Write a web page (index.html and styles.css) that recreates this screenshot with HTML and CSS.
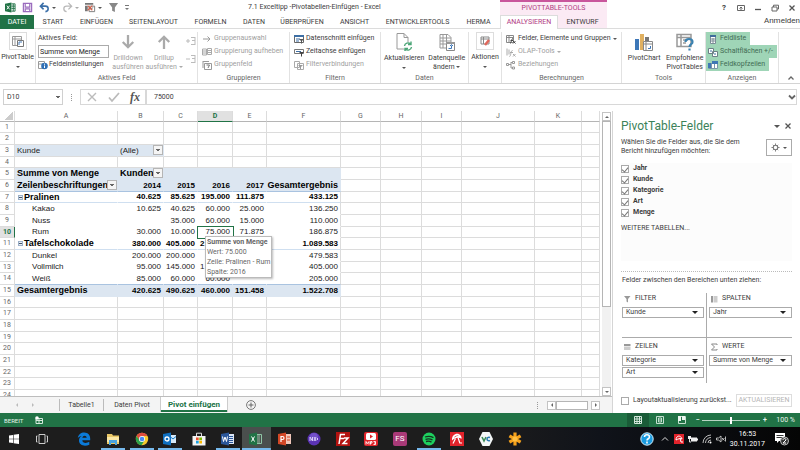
FILE: index.html
```html
<!DOCTYPE html>
<html lang="de">
<head>
<meta charset="utf-8">
<title>7.1 Exceltipp -Pivotabellen-Einfügen - Excel</title>
<link rel="stylesheet" href="styles.css">
</head>
<body>
<header class="titlebar">
  <div class="quick">
    <svg class="q" viewBox="0 0 12 12"><path fill="#217346" d="M0 2l7-1.500v11L0 10z"/><path d="M7 2h4v8H7M9 2v8M7 4.500h4M7 7h4" fill="none" stroke="#217346"/><path d="M2 4l3 4M5 4L2 8" stroke="#fff"/></svg>
    <button aria-label="Speichern"><svg class="q" viewBox="0 0 12 12"><path d="M1.500 1.500h9v9h-9zM3.500 1.500v4h5v-4M3.500 10.500v-3h5v3" fill="none" stroke="#9a6bbd" stroke-width="1.300"/></svg></button>
    <button aria-label="Rückgängig"><svg class="q" viewBox="0 0 12 12"><path d="M5 1L1.500 4.500 5 8M2 4.500h5c4 0 4 5.500 0 6" fill="none" stroke="#3a6ea8" stroke-width="1.700"/></svg><i class="caret"></i></button>
    <button aria-label="Wiederholen"><svg class="q" viewBox="0 0 12 12"><path d="M7 1l3.500 3.500L7 8M10 4.500H5c-4 0-4 5.500 0 6" fill="none" stroke="#b9b9b9" stroke-width="1.400"/></svg><i class="caret pale"></i></button>
    <button aria-label="Pivot bearbeiten"><svg class="q" viewBox="0 0 12 12"><path fill="#777" d="M0 1h9v2H0zM0 4h3v6H0z"/><path d="M4.500 4.500h6v6h-6zM6 8l3-2" fill="#fff" stroke="#777"/><path d="M3 4l5 5M8 4L3 9" stroke="#d8604a" stroke-width="1.200"/></svg><i class="caret"></i></button>
    <button aria-label="Filter"><svg class="q" viewBox="0 0 12 12"><path fill="#888" d="M1 1h10L7.500 6v5l-3-1.500V6z"/></svg></button>
    <button aria-label="Symbolleiste anpassen"><svg class="more" viewBox="0 0 4 6"><path fill="#777" d="M0 0h4v1H0zM0 3h4L2 5z"/></svg></button>
  </div>
  <div class="doc">7.1 Exceltipp -Pivotabellen-Einfügen - Excel</div>
  <div class="context">PIVOTTABLE-TOOLS</div>
  <div class="window">
    <button aria-label="Hilfe"><b>?</b></button>
    <button aria-label="Menüband-Anzeige"><svg viewBox="0 0 8 8"><path d="M.5 1.500h7v5h-7zM4 6V3M2.500 4.500L4 3l1.500 1.500" fill="none" stroke="#666"/></svg></button>
    <button aria-label="Minimieren"><svg viewBox="0 0 8 8"><path d="M1 5.500h6" stroke="#555" stroke-width="1.300"/></svg></button>
    <button aria-label="Verkleinern"><svg viewBox="0 0 8 8"><path d="M1 3h5v4H1zM2.500 3V1.200h5V5H6" fill="none" stroke="#666"/></svg></button>
    <button aria-label="Schließen"><svg viewBox="0 0 8 8"><path d="M1.500 1.500l5 5M6.500 1.500l-5 5" stroke="#555" stroke-width="1.300"/></svg></button>
  </div>
</header>
<nav class="tabs">
  <a class="file" href="#">DATEI</a><a href="#">START</a><a href="#">EINFÜGEN</a><a href="#">SEITENLAYOUT</a><a href="#">FORMELN</a><a href="#">DATEN</a><a href="#">ÜBERPRÜFEN</a><a href="#">ANSICHT</a><a href="#">ENTWICKLERTOOLS</a><a href="#">HERMA</a><a class="current" href="#">ANALYSIEREN</a><a class="ctx" href="#">ENTWURF</a><a class="login" href="#">Anmelden</a>
</nav>

<section class="ribbon">
  <div class="group">
    <div class="cmds"><button class="big"><span class="frame"><svg viewBox="0 0 14 14"><path d="M1.500 2.500h9v9h-9zM1.500 5h9M4 2.500v9" fill="#fff" stroke="#999"/><path d="M6.500 6.500h6v6h-6z" fill="#fff" stroke="#777"/><path d="M8 11V8h3" fill="none" stroke="#4a7ebb"/></svg></span>PivotTable<i class="caret"></i></button></div>
  </div>
  <div class="group">
    <div class="cmds field">
      <div class="col">
        <label for="af">Aktives Feld:</label>
        <input id="af" value="Summe von Menge">
        <button class="cmd"><svg viewBox="0 0 10 10"><path d="M.5 1.500h6v7h-6zM.5 4h6" fill="#fff" stroke="#999"/><circle cx="6.500" cy="6" r="3.300" fill="#2f6fb5"/><path d="M6.500 5.500v2.500M6.500 3.700v1" stroke="#fff"/></svg>Feldeinstellungen</button>
      </div>
      <button class="big off drill"><svg viewBox="0 0 16 16"><path d="M8 0v14M2 8l6 6 6-6" fill="none" stroke="#aaa" stroke-width="2.600"/></svg>Drilldown<br>ausführen</button>
      <button class="big off drill"><svg viewBox="0 0 16 16"><path d="M8 16V2M2 8l6-6 6 6" fill="none" stroke="#aaa" stroke-width="2.600"/></svg>Drillup<span>ausführen <i class="caret pale"></i></span></button>
      <div class="expand"><button aria-label="Erweitern"><svg viewBox="0 0 10 10"><path d="M5 1.500h4M6 4.500h3M5 8.500h4M9 1v8M0 5h4M2 3v4" fill="none" stroke="#bbb"/></svg></button><button aria-label="Reduzieren"><svg viewBox="0 0 10 10"><path d="M5 1.500h4M6 4.500h3M5 8.500h4M9 1v8M0 5h4" fill="none" stroke="#bbb"/></svg></button></div>
    </div>
    <h2>Aktives Feld</h2>
  </div>
  <div class="group">
    <div class="cmds list off">
      <button class="cmd"><svg viewBox="0 0 10 10"><path d="M1 5h7M5.500 2.500L8 5 5.500 7.500" fill="none" stroke="#999"/></svg>Gruppenauswahl</button>
      <button class="cmd"><svg viewBox="0 0 10 10"><path d="M.5 2h4v6h-4zM5.500 1.500h4v6h-4zM1 4h3M1 6h3M6 3.500h3M6 5.500h3" fill="none" stroke="#aaa"/></svg>Gruppierung aufheben</button>
      <button class="cmd"><svg viewBox="0 0 10 10"><path d="M1 1.500h6M1 1v7M2.500 3.500h7v6h-7z" fill="none" stroke="#999"/><path d="M4.500 5h3L6 8" fill="none" stroke="#777"/></svg>Gruppenfeld</button>
    </div>
    <h2>Gruppieren</h2>
  </div>
  <div class="group">
    <div class="cmds list">
      <button class="cmd"><svg viewBox="0 0 10 10"><path d="M.5 1.500h9v7h-9z" fill="#fff" stroke="#666"/><path d="M0 1h10v2H0zM2 4.500h4v1H2zM2 6.500h3v1H2z" fill="#3d6fa5"/><path d="M5 5h5L8 7v2.500H7V7z" fill="#555"/></svg>Datenschnitt einfügen</button>
      <button class="cmd"><svg viewBox="0 0 10 10"><path d="M.5 2.500h9v4h-9z" fill="#fff" stroke="#777"/><path d="M2 4h5v1H2z" fill="#3d6fa5"/><path d="M5 5h5L8 7v2.500H7V7z" fill="#444"/></svg>Zeitachse einfügen</button>
      <button class="cmd off"><svg viewBox="0 0 10 10"><path d="M.5 1.500h5v6h-5zM3.500 3.500h6v6h-6z" fill="#fff" stroke="#aaa"/><path d="M4 5h5L7 7v2H6V7z" fill="#999"/></svg>Filterverbindungen</button>
    </div>
    <h2>Filtern</h2>
  </div>
  <div class="group">
    <div class="cmds pair">
      <button class="big"><svg class="art" viewBox="0 0 18 18"><path d="M2 .5h7l4 4V16H2zM9 .5v4h4" fill="#fff" stroke="#999"/><circle cx="13" cy="13.500" r="4.500" fill="#fff"/><path d="M9.500 13a3.500 3.500 0 0 1 6-2M16.500 14a3.500 3.500 0 0 1-6 2M16 8.500V11.500h-3M10 18.500V15.500h3" fill="none" stroke="#4ca577" stroke-width="1.400"/></svg>Aktualisieren<i class="caret"></i></button>
      <button class="big"><svg class="art" viewBox="0 0 18 18"><path d="M2 1.500h8l3 3V15H2zM2 5h11M2 8h11M2 11h8M5 2v13M8.500 2v13" fill="#fff" stroke="#999"/><path d="M8.500 9.500h8v8h-8z" fill="#fff" stroke="#888"/><path d="M8 9h9v2H8z" fill="#999"/><path d="M10.500 15.500h3v-3M12 13l1.500-1.500L15 13" fill="none" stroke="#3d77b8"/></svg>Datenquelle<span>ändern <i class="caret"></i></span></button>
    </div>
    <h2>Daten</h2>
  </div>
  <div class="group">
    <div class="cmds"><button class="big"><span class="frame"><svg viewBox="0 0 14 14"><path d="M3 3h8v7H3zM3 5h8M5.500 3v7" fill="#fff" stroke="#888"/><path d="M7 11l4-5" stroke="#e0685c" stroke-width="2.500"/></svg></span>Aktionen<i class="caret"></i></button></div>
  </div>
  <div class="group">
    <div class="cmds list">
      <button class="cmd"><svg viewBox="0 0 10 10"><path d="M.5 1.500h7v7h-7zM.5 3.500h7M3 1.500v7" fill="#fff" stroke="#888"/><path d="M4 9.500c1.500 0 1-5 3-5M4.500 6.500H7M7 7l2.500 2.500M9.500 7L7 9.500" fill="none" stroke="#444"/></svg>Felder, Elemente und Gruppen <i class="caret"></i></button>
      <button class="cmd off"><svg viewBox="0 0 10 10"><path d="M1 1.500v7M3 2.500v5M3.500 9.500c1.500 0 1-6 3-6M4 5.500h3M7 7l2.500 2.500M9.500 7L7 9.500" fill="none" stroke="#aaa"/></svg>OLAP-Tools <i class="caret pale"></i></button>
      <button class="cmd off"><svg viewBox="0 0 10 10"><path d="M.5 3.500h2v2h-2zM6.500 1.500h2v2h-2zM6.500 7h2v2h-2zM3 4.500h2M5 2.500h1M5 8h1M5 2v6" fill="none" stroke="#999"/></svg>Beziehungen</button>
    </div>
    <h2>Berechnungen</h2>
  </div>
  <div class="group">
    <div class="cmds pair tools">
      <button class="big"><svg class="art" viewBox="0 0 18 18"><path fill="#3d77b8" d="M0 6h4v11H0z"/><path fill="#e0b060" d="M5 1h4v16H5z"/><path fill="#777" d="M10 4h4v4h-4z"/><path d="M8.500 8.500h9v9h-9z" fill="#fff" stroke="#888"/><path d="M8.500 11h9M11 8.500v9" stroke="#888"/><path d="M13 15.500h2.500V13" fill="none" stroke="#3d77b8"/></svg>PivotChart</button>
      <button class="big"><svg class="art" viewBox="0 0 18 18"><path d="M1 1.500h14v12H1zM1 4.500h14M5 1.500v12M7 7h5M7 10h3" fill="#fff" stroke="#999" stroke-width="1.500"/><path d="M9.500 9c0-4 7-4 7 0 0 2.500-3 2-3 5M13.500 15.500v2" fill="none" stroke="#3b82b0" stroke-width="2.200"/></svg>Empfohlene<br>PivotTables</button>
    </div>
    <h2>Tools</h2>
  </div>
  <div class="group">
    <div class="cmds list show">
      <button class="cmd on"><svg viewBox="0 0 10 10"><path d="M2.500 1.500h5v8h-5zM2.500 5h5M2.500 7h5M5 4v5" fill="#fff" stroke="#7a8c96"/><path d="M2 1h6v2H2z" fill="#3f6c9c"/></svg>Feldliste</button>
      <button class="cmd on"><svg viewBox="0 0 10 10"><path d="M.5 1.500h5v5h-5zM4.500 4.500h5v5h-5z" fill="#fff" stroke="#6b7f86"/><path d="M2 4h2M6 7h2" stroke="#3d6fa5"/></svg>Schaltflächen +/-</button>
      <button class="cmd on"><svg viewBox="0 0 10 10"><path d="M.5 3.500h9v5h-9zM3.500 3.500v5M6.500 3.500v5" fill="#fff" stroke="#7996a8"/><path d="M0 3h3v5H0zM4 1h6v3H4z" fill="#3f78b5"/></svg>Feldkopfzeilen</button>
    </div>
    <h2>Anzeigen</h2>
  </div>
  <button class="collapse" aria-label="Menüband reduzieren"><svg viewBox="0 0 8 8"><path d="M1.500 5.500L4 3l2.500 2.500" fill="none" stroke="#666" stroke-width="1.300"/></svg></button>
</section>

<section class="formula">
  <select class="namebox" aria-label="Namenfeld"><option>D10</option></select>
  <i class="grip"></i>
  <div class="fx">
    <button aria-label="Abbrechen"><svg viewBox="0 0 12 12"><path d="M2 2l8 8M10 2l-8 8" stroke="#bbb" stroke-width="1.400"/></svg></button>
    <button aria-label="Eingeben"><svg viewBox="0 0 12 12"><path d="M1 6.500l3 3.500 7-8" fill="none" stroke="#bbb" stroke-width="1.800"/></svg></button>
    <button aria-label="Funktion einfügen"><em>fx</em></button>
  </div>
  <div class="entry"><input aria-label="Bearbeitungsleiste" value="75000"><svg viewBox="0 0 8 8"><path d="M1 2.500l3 3 3-3" fill="none" stroke="#666" stroke-width="1.800"/></svg></div>
</section>

<main class="work">
  <section class="book">
    <div class="sheet">
      <table>
        <colgroup><col class="c0"><col class="ca"><col class="cb"><col class="cc"><col class="cd"><col class="cc"><col class="cf"><col class="cg"><col class="ch"><col class="cg"><col class="cj"><col class="ck"><col></colgroup>
        <thead><tr><th class="corner"></th><th>A</th><th>B</th><th>C</th><th class="sel">D</th><th>E</th><th>F</th><th>G</th><th>H</th><th>I</th><th>J</th><th>K</th><th></th></tr></thead>
        <tbody>
        <tr><th>1<td><td><td><td><td><td><td><td><td><td><td><td></tr>
        <tr><th>2<td><td><td><td><td><td><td><td><td><td><td><td></tr>
        <tr><th>3<td class="f l">Kunde<td class="f l">(Alle)<button class="dd" aria-label="Filter Kunde"></button><td><td><td><td><td><td><td><td><td><td></tr>
        <tr><th>4<td><td><td><td><td><td><td><td><td><td><td><td></tr>
        <tr class="p hd"><th>5<td>Summe von Menge<td class="l">Kunden<button class="dd" aria-label="Filter Kunden"></button><td><td><td><td><td><td><td><td><td><td></tr>
        <tr class="p hd line"><th>6<td>Zeilenbeschriftungen<button class="dd" aria-label="Filter Zeilen"></button><td>2014<td>2015<td>2016<td>2017<td class="wide">Gesamtergebnis<td><td><td><td><td><td></tr>
        <tr class="p bold thin"><th>7<td><button class="minus" aria-label="Reduzieren"></button>Pralinen<td>40.625<td>85.625<td>195.000<td>111.875<td>433.125<td><td><td><td><td><td></tr>
        <tr class="p sub"><th>8<td>Kakao<td>10.625<td>40.625<td>60.000<td>25.000<td>136.250<td><td><td><td><td><td></tr>
        <tr class="p sub"><th>9<td>Nuss<td><td>35.000<td>60.000<td>15.000<td>110.000<td><td><td><td><td><td></tr>
        <tr class="p sub"><th class="sel">10<td>Rum<td>30.000<td>10.000<td class="active">75.000<div class="tip" role="tooltip"><b>Summe von Menge</b><br>Wert: 75.000<br>Zeile: Pralinen - Rum<br>Spalte: 2016</div><td>71.875<td>186.875<td><td><td><td><td><td></tr>
        <tr class="p bold thin"><th>11<td><button class="minus" aria-label="Reduzieren"></button>Tafelschokolade<td>380.000<td>405.000<td class="under">2<td><td>1.089.583<td><td><td><td><td><td></tr>
        <tr class="p sub"><th>12<td>Dunkel<td>200.000<td>200.000<td><td><td>479.583<td><td><td><td><td><td></tr>
        <tr class="p sub"><th>13<td>Vollmilch<td>95.000<td>145.000<td class="under">1<td><td>405.000<td><td><td><td><td><td></tr>
        <tr class="p sub line"><th>14<td>Weiß<td>85.000<td>60.000<td>60.000<td><td>205.000<td><td><td><td><td><td></tr>
        <tr class="p hd"><th>15<td>Gesamtergebnis<td>420.625<td>490.625<td>460.000<td>151.458<td>1.522.708<td><td><td><td><td><td></tr>
        <tr><th>16<td><td><td><td><td><td><td><td><td><td><td><td></tr>
        <tr><th>17<td><td><td><td><td><td><td><td><td><td><td><td></tr>
        <tr><th>18<td><td><td><td><td><td><td><td><td><td><td><td></tr>
        <tr><th>19<td><td><td><td><td><td><td><td><td><td><td><td></tr>
        <tr><th>20<td><td><td><td><td><td><td><td><td><td><td><td></tr>
        <tr><th>21<td><td><td><td><td><td><td><td><td><td><td><td></tr>
        <tr><th>22<td><td><td><td><td><td><td><td><td><td><td><td></tr>
        <tr><th>23<td><td><td><td><td><td><td><td><td><td><td><td></tr>
        <tr><th>24<td><td><td><td><td><td><td><td><td><td><td><td></tr>
        </tbody>
      </table>
      <div class="vscroll"><button aria-label="Nach oben"><i class="tri up"></i></button><div class="thumb"></div><div class="track"></div><button aria-label="Nach unten"><i class="tri"></i></button></div>
    </div>
    <div class="sheettabs">
      <button class="nav" aria-label="Zurück"><i class="tri left pale"></i></button><button class="nav" aria-label="Weiter"><i class="tri right pale"></i></button>
      <a class="t1" href="#">Tabelle1</a><a class="t2" href="#">Daten Pivot</a><a class="t3" href="#">Pivot einfügen</a>
      <button class="plus" aria-label="Neues Blatt"><svg viewBox="0 0 10 10"><circle cx="5" cy="5" r="4.400" fill="none" stroke="#777"/><path d="M2.500 5h5M5 2.500v5" stroke="#666"/></svg></button>
      <i class="grip"></i>
      <div class="hscroll"><button aria-label="Nach links"><i class="tri left"></i></button><div class="thumb"></div><button class="end" aria-label="Nach rechts"><i class="tri right"></i></button></div>
    </div>
  </section>

  <aside class="panel">
    <div class="ptitle"><h1>PivotTable-Felder</h1><i class="caret"></i><button aria-label="Schließen"><svg viewBox="0 0 8 8"><path d="M1.500 1.500l5 5M6.500 1.500l-5 5" stroke="#555" stroke-width="1.300"/></svg></button></div>
    <div class="intro"><p>Wählen Sie die Felder aus, die Sie dem<br>Bericht hinzufügen möchten:</p><button class="gear" aria-label="Extras"><svg viewBox="0 0 10 10"><circle cx="5" cy="5" r="2.500" fill="none" stroke="#777" stroke-width="1.200"/><path d="M5 .5v2M5 7.500v2M.5 5h2M7.500 5h2M2 2l1.200 1.200M8 2L6.800 3.200M2 8l1.200-1.200M8 8L6.800 6.800" stroke="#777"/></svg><i class="caret"></i></button></div>
    <div class="fields">
      <label><input type="checkbox" checked>Jahr</label>
      <label><input type="checkbox" checked>Kunde</label>
      <label><input type="checkbox" checked>Kategorie</label>
      <label><input type="checkbox" checked>Art</label>
      <label><input type="checkbox" checked>Menge</label>
      <a href="#">WEITERE TABELLEN...</a>
    </div>
    <p class="hint">Felder zwischen den Bereichen unten ziehen:</p>
    <div class="areas">
      <div class="area"><h3><svg viewBox="0 0 8 8"><path fill="#999" d="M1 1h6.500L5 4v3.500L3.500 6.500V4z"/></svg>FILTER</h3><button class="pill">Kunde<i class="caret"></i></button></div>
      <div class="area"><h3><svg viewBox="0 0 8 8"><path fill="#999" d="M1 1h2v6.500H1z"/><path fill="#ccc" d="M3.500 1h4v6.500h-4z"/></svg>SPALTEN</h3><button class="pill">Jahr<i class="caret"></i></button></div>
      <div class="area"><h3><svg viewBox="0 0 8 8"><path fill="#999" d="M1 1h6.500v2H1z"/><path fill="#ccc" d="M1 3.500h6.500v3.500H1z"/></svg>ZEILEN</h3><button class="pill">Kategorie<i class="caret"></i></button><button class="pill">Art<i class="caret"></i></button></div>
      <div class="area"><h3><svg viewBox="0 0 8 8"><path d="M7 2V1H1.500L4.500 4l-3 3H7V6" fill="none" stroke="#888"/></svg>WERTE</h3><button class="pill">Summe von Menge<i class="caret"></i></button></div>
    </div>
    <div class="update"><label><input type="checkbox">Layoutaktualisierung zurückst...</label><button disabled>AKTUALISIEREN</button></div>
  </aside>
</main>

<footer class="status">
  <span class="ready">BEREIT</span>
  <svg class="macro" viewBox="0 0 8 8"><path d="M1 2.500h6.500v5H1zM1 4.500h6.500M4 2.500v5" fill="none" stroke="#d5e8dc"/><circle cx="2" cy="2" r="1.800" fill="#fff"/></svg>
  <button class="view on" aria-label="Normal"><svg viewBox="0 0 8 8"><path d="M.5.5h7v7h-7zM.5 3h7M.5 5.500h7M3 .5v7M5.500.5v7" fill="none" stroke="#d5e8dc"/></svg></button>
  <button class="view" aria-label="Seitenlayout"><svg viewBox="0 0 8 8"><path d="M.5.5h7v7h-7zM2.500 2h3v4h-3zM2.500 4h3" fill="none" stroke="#c5dfd0"/></svg></button>
  <button class="view" aria-label="Umbruchvorschau"><svg viewBox="0 0 8 8"><path d="M.5.5h7v7h-7z" fill="none" stroke="#c5dfd0"/><path fill="#eef7f1" d="M0 0h3v5H0zM4 0h3v4H4z"/></svg></button>
  <b class="pm">−</b><input type="range" aria-label="Zoom" min="0" max="100" value="50"><b class="pm">+</b>
  <span class="pct">100 %</span>
</footer>

<footer class="taskbar">
  <button class="os" aria-label="Start"><svg viewBox="0 0 12 12"><path fill="#fff" d="M1 2.500l4-.6v3.800H1zM5.600 1.800L11 1v4.700H5.600zM1 6.300h4v3.800l-4-.6zM5.600 6.300H11V11l-5.400-.8z"/></svg></button>
  <button class="os" aria-label="Taskansicht"><svg viewBox="0 0 12 12"><path d="M3 1.500h6v9H3zM1.500 3H.5v6h1M10.500 3h1v6h-1" fill="none" stroke="#ccc"/></svg></button>
  <div class="apps">
    <button aria-label="Edge"><svg viewBox="0 0 14 14"><path fill="#0b7ad8" fill-rule="evenodd" d="M.8 6.300C1.300 2.500 4 .6 7.200.6c4 0 6.100 2.900 6 6.300v1.300H5.300c.2 3.200 4.300 3.300 7 1.600v2.900C8 14.900 2 13.600 2 8.600c0-2 1-3.600 2.700-4.500C3 4.200 1.600 5 .8 6.300zM5.300 5.800h4.400C9.600 3 5.800 3 5.300 5.800z"/></svg></button>
    <button class="run" aria-label="Explorer"><svg viewBox="0 0 14 14"><path fill="#e9c766" d="M1 2h5l1 1.500h6V12H1z"/><path fill="#fbe7a4" d="M1 5h12v5H1z"/><path fill="#4aa3df" d="M3 8h8v5H9v-2H5v2H3z"/></svg></button>
    <button class="run" aria-label="Chrome"><svg viewBox="0 0 14 14"><circle cx="7" cy="7" r="6.200" fill="#f7c92c"/><path fill="#dd4b3e" d="M1.600 4A6.200 6.200 0 0 1 12.400 4H7L4.300 8.500z"/><path fill="#2ba24c" d="M1.600 4A6.200 6.200 0 0 0 6.500 13.200L9.600 8.500 4.500 8.600z"/><circle cx="7" cy="7" r="3" fill="#fff"/><circle cx="7" cy="7" r="2.300" fill="#4a8af4"/></svg></button>
    <button class="run" aria-label="Outlook"><svg viewBox="0 0 14 14"><path fill="#d7e9f8" d="M6 3h7v8H6z"/><path d="M7 4.500l3 2.500 3-2.500" fill="none" stroke="#1279c8"/><path fill="#0f6fc0" d="M0 2l8-1.500v13L0 12z"/><circle cx="4" cy="7" r="2" fill="none" stroke="#fff" stroke-width="1.300"/></svg></button>
    <button aria-label="Store"><svg viewBox="0 0 14 14"><path fill="#f4f4f4" d="M.5 4h13v9.500H.5z"/><path d="M4.500 4V1.200h5V4" fill="none" stroke="#ddd"/><path fill="#e8502e" d="M4 5.500h2.700v2.700H4z"/><path fill="#7fba00" d="M7.300 5.500H10v2.700H7.300z"/><path fill="#1ba1e2" d="M4 8.800h2.700v2.700H4z"/><path fill="#fbb900" d="M7.300 8.800H10v2.700H7.300z"/></svg></button>
    <button class="run" aria-label="Word"><svg viewBox="0 0 14 14"><path fill="#dce6f5" d="M7 2h6v10H7z"/><path d="M8 4.500h4M8 6.500h4M8 8.500h4M8 10.500h4" stroke="#2b579a"/><path fill="#2b579a" d="M0 2l8-1.500v13L0 12z"/><path d="M1.500 4.500l1 5L4 5l1.500 4.500 1-5" fill="none" stroke="#fff"/></svg></button>
    <button class="run now" aria-label="Excel"><svg viewBox="0 0 14 14"><path d="M8 2.500h4.500v9H8zM10 2v10" fill="none" stroke="#8fc5a5"/><path fill="#217346" d="M0 2l8-1.500v13L0 12z"/><path d="M2.500 4.500l3 5M5.500 4.500l-3 5" stroke="#fff"/></svg></button>
    <button aria-label="PowerPoint"><svg viewBox="0 0 14 14"><path fill="#f0c7ba" d="M7 2h6v10H7z"/><path d="M9 5h3M9 8h3" stroke="#d24726"/><path fill="#d24726" d="M0 2l8-1.500v13L0 12z"/><path d="M3 10V4.500h1.500a1.500 1.500 0 0 1 0 3H3" fill="none" stroke="#fff" stroke-width="1.200"/></svg></button>
    <button aria-label="Browser"><svg viewBox="0 0 14 14"><circle cx="7" cy="7" r="6.500" fill="#5b33b5"/><circle cx="7" cy="5" r="4" fill="#7350c8"/><path d="M3 9V5l2.500 4V5M7 5l2 4M9 5L7 9M10.500 6v2" fill="none" stroke="#d5c9f5"/></svg></button>
    <button aria-label="FileZilla"><svg viewBox="0 0 14 14"><path fill="#b3120f" d="M0 0h14v14H0z"/><path d="M3 12l1.500-9.500H9M3.500 6.500H8M8 6h4l-5 5.500h4.500" fill="none" stroke="#fff" stroke-width="1.500"/></svg></button>
    <button aria-label="MP3"><svg viewBox="0 0 14 14"><rect width="14" height="14" rx="2" fill="#e0242a"/><rect x="2" y="1" width="10" height="7" rx="1.500" fill="#fff"/><path fill="#e0242a" d="M6 2.500L9 4.500 6 6.500z"/><path d="M2 12.500v-3l1.500 2L5 9.500v3M6.500 12.500v-3H8v1.500H6.500M9.500 9.500h2v3h-2M10 11h1.500" fill="none" stroke="#fff" stroke-width=".9"/></svg></button>
    <button aria-label="FS"><span class="fs">FS</span></button>
    <button class="run" aria-label="Spotify"><svg viewBox="0 0 14 14"><circle cx="7" cy="7" r="6.500" fill="#1ed05f"/><path d="M3 5c3-1 6-.7 8.500.6M3.500 7.300c2.500-.8 5-.5 7 .6M4 9.500c2-.5 4-.3 5.500.6" fill="none" stroke="#14331f" stroke-width="1.300"/></svg></button>
    <button aria-label="Avira"><svg viewBox="0 0 14 14"><path fill="#e2232b" d="M0 0h14v14H0z"/><path fill="#fff" d="M2 8.500C1.500 3 6 1 9 2.200c2 .8 2.800 2.800 2.600 4.500C8.500 5 5 5.500 2 8.500z"/><path fill="#e2232b" d="M4 5.800C5 3.800 7 3 8.800 3.800c-1.800.1-3.300.8-4.800 2z"/><path d="M8 5.500l1.800 5.500H12M5.500 6.500L3 11.500" fill="none" stroke="#fff" stroke-width="1.200"/></svg></button>
    <button aria-label="VC"><svg viewBox="0 0 14 14"><path fill="#f4f7f7" d="M3.500 0h7L14 7l-3.500 7h-7L0 7z"/><path d="M3 5l2 4 2-4" fill="none" stroke="#3c8c58" stroke-width="1.600"/><path d="M11 5.500c-4-1.500-4 4.500 0 3" fill="none" stroke="#2b78b0" stroke-width="1.500"/></svg></button>
    <button aria-label="Stern"><svg viewBox="0 0 14 14"><path d="M7 .5v13M1.400 3.800l11.200 6.400M12.600 3.800L1.400 10.200" stroke="#f5a21d" stroke-width="3.200"/><circle cx="7" cy="7" r="2.500" fill="#ffc043"/></svg></button>
  </div>
  <div class="tray">
    <svg class="help" viewBox="0 0 14 14"><circle cx="7" cy="7" r="6.200" fill="#1a9be0" stroke="#d7effb"/><path d="M4.500 5c0-3 5-3 5 0 0 2-2.500 1.500-2.500 3.500M7 9.500v2" fill="none" stroke="#fff" stroke-width="1.600"/></svg>
    <svg viewBox="0 0 10 10"><path d="M2 6.500l3-3 3 3" fill="none" stroke="#ddd"/></svg>
    <svg viewBox="0 0 10 10"><path fill="#e2232b" d="M0 0h10v10H0z"/><path d="M2 6c0-5 5-5 6-1-2-1-4 0-6 1zM6 4l1 4h2" fill="none" stroke="#fff"/></svg>
    <svg viewBox="0 0 10 10"><path fill="#eee" d="M3 3.500h6v4H3zM9 4.500h1v2H9zM0 2h3v3H0z"/><path d="M1.500 5v3H3" fill="none" stroke="#ddd"/></svg>
    <svg viewBox="0 0 10 10"><path d="M1 9a8 8 0 0 1 8-8M3.500 9A5.500 5.500 0 0 1 9 3.500M6 9a3 3 0 0 1 3-3" fill="none" stroke="#bbb"/><circle cx="8.500" cy="8.500" r="1" fill="#fff"/></svg>
    <svg viewBox="0 0 10 10"><path d="M.5 4h2L5 2v6L2.500 6h-2zM6 4l2.500 2.500M8.500 4L6 6.500M9.500 2.500v5" fill="none" stroke="#ccc" stroke-width=".9"/></svg>
    <time>16:53<br>30.11.2017</time>
    <svg class="note" viewBox="0 0 16 14"><path fill="#fff" d="M1 1h10v8H5l-2 2V9H1z"/><path d="M2.500 3.500h7M2.500 5.500h7" stroke="#333"/><circle cx="10.500" cy="9" r="4" fill="#333" stroke="#bbb"/><path d="M9 8c0-2 3-2 3 0L9 11h3" fill="none" stroke="#fff"/></svg>
  </div>
</footer>
</body>
</html>
```
FILE: styles.css
```css
* { box-sizing: border-box; }
body {
  margin: 0;
  height: 100vh;
  display: flex;
  flex-direction: column;
  overflow: hidden;
  background: #fff;
  color: #3c3c3c;
  font: 7px/9px Roboto, "Open Sans", sans-serif;
}
button, input, select { font: inherit; color: inherit; border: 0; padding: 0; margin: 0; background: none; min-width: 0; }
a { color: inherit; text-decoration: none; }
h1, h2, h3, p { margin: 0; font-weight: 400; }
svg { display: block; flex: none; }
.caret { display: inline-block; flex: none; border: 2px solid transparent; border-top-color: #555; border-bottom: 0; }
.caret.pale { border-top-color: #aaa; }
.grip { height: 7px; border-left: 1px dotted #999; }

/* title bar and tabs */
.titlebar { display: grid; grid-template-columns: 134px 366px 107px 1fr; height: 15px; flex: none; }
.quick { display: flex; align-items: center; padding-left: 5px; gap: 6px; }
.quick button { display: flex; align-items: center; gap: 2px; }
.quick .q { width: 11px; height: 11px; }
.quick .more { width: 4px; height: 6px; }
.doc { padding-left: 114px; line-height: 15px; white-space: nowrap; }
.context { background: #fbeaf4; border-top: 2px solid #c9569c; color: #b23a83; text-align: center; line-height: 12px; }
.window { display: flex; justify-content: flex-end; align-items: center; gap: 9px; padding-right: 4px; }
.window svg { width: 8px; height: 8px; }
.window button { width: 8px; font-size: 8px; }
.tabs {
  display: grid;
  grid-template-columns: 34px 38px 49px 65px 49px 38px 58px 47px 79px 43px 58px 49px 1fr;
  height: 14px;
  flex: none;
  line-height: 14px;
  text-align: center;
  border-bottom: 1px solid #dcdcdc;
}
.tabs a { height: 13px; }
.tabs .file { background: #217346; color: #fff; height: 14px; }
.tabs .current { background: #fff; color: #b23a83; height: 14px; border: 1px solid #dcdcdc; border-width: 1px 1px 0; line-height: 12px; }
.tabs .ctx { background: #fbeaf4; }
.tabs .login { text-align: right; line-height: 12px; white-space: nowrap; font-size: 8px; }

/* ribbon */
.ribbon {
  display: grid;
  grid-template-columns: 36px 162px 92px 91px 88px 33px 120px 84px 73px 1fr;
  flex: none;
  height: 55px;
  padding-top: 3px;
  border-bottom: 1px solid #d4d4d4;
}
.group { display: flex; flex-direction: column; border-right: 1px solid #e2e2e2; min-width: 0; }
.cmds { flex: 1; }
.group h2 { font-size: 7px; line-height: 10px; text-align: center; color: #666; }
.list { display: flex; flex-direction: column; align-items: flex-start; padding-left: 4px; }
.cmd { display: flex; align-items: center; gap: 2px; height: 13px; white-space: nowrap; }
.cmd svg { width: 10px; height: 10px; }
.off { color: #a0a0a0; }
.list.show { padding-left: 0; }
.cmd.on { background: #9fd5b7; padding: 0 4px 0 2px; color: #3f6b53; }
.big { display: flex; flex-direction: column; align-items: center; width: 100%; line-height: 9px; white-space: nowrap; }
.big > .caret { margin-top: 4px; }
.big span .caret { vertical-align: 1px; }
.frame { border: 1px solid #ddd; width: 18px; height: 18px; display: grid; place-items: center; margin-bottom: 3px; }
.frame svg { width: 14px; height: 14px; }
.art { width: 18px; height: 18px; margin: 1px 0 3px; }
.pair { display: grid; grid-template-columns: 1fr 1fr; padding-left: 2px; }
.field { display: grid; grid-template-columns: 73px 34px 38px 1fr; padding-left: 2px; }
.field .col { display: flex; flex-direction: column; }
.field label { line-height: 13px; }
.field input { border: 1px solid #ababab; height: 13px; width: 71px; padding: 0 1px; color: #222; }
.field .cmd { gap: 1px; }
.drill svg { width: 14px; height: 16px; margin: 2px 0 4px; }
.expand { padding: 4px 0 0 3px; display: flex; flex-direction: column; gap: 8px; }
.expand svg { width: 10px; height: 10px; }
.collapse { align-self: end; padding: 0 0 1px 8px; }
.collapse svg { width: 8px; height: 8px; }

/* formula bar */
.formula { display: flex; align-items: center; flex: none; padding: 5px 3px 0; }
.namebox { appearance: none; width: 60px; height: 16px; border: 1px solid #d0d0d0; padding-left: 3px;
  background: linear-gradient(#666, #666) 52px 6px / 4px 1px no-repeat, linear-gradient(#666, #666) 53px 7px / 2px 1px no-repeat; }
.formula .grip { margin: 0 8px; }
.fx { display: flex; align-items: center; justify-content: space-around; width: 66px; height: 16px; border: 1px solid #d8d8d8; }
.fx svg { width: 12px; height: 12px; }
.fx em { font: italic bold 12px/14px "Liberation Serif", serif; color: #555; }
.entry { flex: 1; display: flex; align-items: center; height: 16px; border: 1px solid #d8d8d8; }
.entry input { flex: 1; padding-left: 7px; }
.entry svg { width: 8px; height: 8px; }

/* sheet */
.work { flex: 1; display: flex; min-height: 0; }
.book { flex: 1; display: flex; flex-direction: column; min-width: 0; padding-top: 6px; }
.sheet { flex: 1; display: flex; min-height: 0; overflow: hidden; border-bottom: 1px solid #bdbdbd; }
table { flex: 1; width: 0; table-layout: fixed; border-collapse: separate; border-spacing: 0; font: 8px/11px "Liberation Sans", Arial, sans-serif; color: #222; align-self: flex-start; }
.c0 { width: 15px; } .ca { width: 103px; } .cb { width: 46px; } .cc { width: 34px; } .cd { width: 35px; }
.cf { width: 74px; } .cg { width: 40px; } .ch { width: 41px; } .cj { width: 73px; } .ck { width: 47px; }
th, td { padding: 0; height: 12px; border: 0 solid #dcdcdc; border-width: 0 1px 1px 0; white-space: nowrap; }
th { font: 7px/11px Roboto, sans-serif; color: #666; text-align: center; }
thead th { line-height: 10px; height: 11px; border-bottom-color: #b5b5b5; }
.corner { background: linear-gradient(135deg, transparent 50%, #ccc 50%) 5px 1px / 8px 8px no-repeat; }
tbody tr:nth-child(3n+1) > * { height: 11px; line-height: 10px; }
th.sel { background: #e1e1e1; color: #217346; font-weight: 700; }
thead th.sel { border-bottom-color: #217346; }
tbody th.sel { border-right-color: #217346; }
.l, td:nth-child(2) { text-align: left; padding-left: 2px; }
td.f { background: #dce6f1; border-right-color: #dce6f1; }
.p td { text-align: right; padding-right: 2px; }
.p td:nth-child(-n+7) { border-color: #fff; }
.p td:nth-child(7) { border-right-color: #dcdcdc; }
.p td:nth-child(2), .p td.l { text-align: left; padding-right: 0; }
.hd td:nth-child(-n+7) { background: #dce6f1; border-color: #dce6f1; font-weight: 700; color: #000; }
.line td:nth-child(-n+7) { border-bottom-color: #a9c3e0; }
.thin td:nth-child(-n+7) { border-bottom-color: #cfdff0; }
.bold td { font-weight: 700; color: #000; }
.hd td:nth-child(2), .hd .l, .hd .wide, .bold td:nth-child(2) { font-size: 9px; }
.sub td:nth-child(2) { padding-left: 17px; }
td:has(.dd) { position: relative; }
.dd { position: absolute; right: 0; top: 0; width: 10px; height: 10px; border: 1px solid #b5b5b5; background: linear-gradient(#666, #666) 2px 3px / 4px 1px no-repeat, linear-gradient(#666, #666) 3px 4px / 2px 1px no-repeat, #f5f5f5; }
.minus { width: 5px; height: 5px; border: 1px solid #9cb0c8; margin: 0 1px 0 1px; vertical-align: 1px; background: linear-gradient(#456, #456) 0 1px / 3px 1px no-repeat, #e8eef6; }
.p td.active { position: relative; outline: 1px solid #217346; }
.p td.under { text-align: left; padding-left: 2px; }
.tip { position: absolute; z-index: 2; left: 7px; top: 9px; background: #fff; border: 1px solid #bbb; box-shadow: 1px 1px 2px #0004; padding: 0 1px; font: 7px/10px Roboto, sans-serif; color: #666; text-align: left; min-width: 67px; }
.vscroll { width: 12px; padding: 1px 1px 0 2px; display: flex; flex-direction: column; }
.vscroll button, .hscroll button { flex: none; width: 9px; height: 9px; border: 1px solid #c3c3c3; background: #fff; display: grid; place-items: center; }
.vscroll .thumb { flex: 187; border: 1px solid #b5b5b5; background: #fff; }
.track { flex: 81; background: #f1f1f1; }
.tri { border: 2px solid transparent; border-top-color: #666; border-bottom: 0; }
.tri.up { transform: rotate(180deg); }
.tri.left { transform: rotate(90deg); }
.tri.right { transform: rotate(-90deg); }
.tri.pale { border-top-color: #bbb; }
.sheettabs { flex: none; height: 16px; display: flex; align-items: center; background: #f4f4f4; padding-left: 9px; line-height: 15px; text-align: center; }
.nav { width: 16px; display: grid; place-items: center; }
.t1 { width: 45px; margin-left: 18px; border: solid #bbb; border-width: 0 1px; line-height: 12px; }
.t2 { width: 56px; }
.t3 { width: 68px; align-self: stretch; background: #fff; border: 1px solid #ccc; border-width: 0 1px; box-shadow: inset 0 -2px #217346; color: #217346; font-weight: 700; margin-bottom: 1px; font-size: 8px; }
.plus { margin-left: 18px; }
.plus svg { width: 10px; height: 10px; }
.sheettabs .grip { margin: 0 9px 0 auto; }
.hscroll { display: flex; width: 53px; margin-right: 12px; }
.hscroll .thumb { flex: 1; height: 9px; border: 1px solid #b5b5b5; background: #fff; }
.hscroll .end { margin-left: 3px; }

/* field panel */
.panel { width: 188px; flex: none; margin-top: 6px; border-left: 1px solid #d5d5d5; padding: 4px 8px 0 8px; display: flex; flex-direction: column; }
.ptitle { display: flex; align-items: center; gap: 4px; }
.ptitle h1 { font-size: 12px; line-height: 22px; color: #3b8259; flex: 1; }
.ptitle svg { width: 8px; height: 8px; }
.ptitle .caret { border-width: 3px 3px 0; }
.intro { display: flex; justify-content: space-between; align-items: flex-start; margin-top: 1px; }
.gear { width: 26px; height: 17px; border: 1px solid #ababab; display: flex; align-items: center; justify-content: space-evenly; margin-top: 1px; }
.gear svg { width: 9px; height: 9px; }
.fields { margin-top: 7px; background: #fcfcfc; height: 98px; display: flex; flex-direction: column; }
.fields label { display: flex; align-items: center; gap: 4px; height: 11px; font-weight: 700; }
input[type=checkbox] { appearance: none; flex: none; width: 8px; height: 8px; border: 1px solid #aaa; background: #fff; display: grid; place-items: center; }
input[type=checkbox]:checked::before { content: ""; width: 3px; height: 5px; border: solid #777; border-width: 0 1px 1px 0; transform: rotate(40deg); }
.fields a { margin-top: 6px; }
.hint { margin-top: 10px; padding: 4px 0 0 1px; border-top: 1px dotted #bbb; }
.areas { display: grid; grid-template-columns: 85px 1fr; margin: 8px 0 0 1px; }
.area { padding: 0 2px 0 0; }
.area:nth-child(odd) { border-right: 1px solid #ababab; }
.area:nth-child(even) { padding-left: 2px; padding-right: 0; }
.area:nth-child(-n+2) { height: 45px; border-bottom: 1px solid #ababab; }
.area:nth-child(n+3) { height: 45px; padding-top: 3px; }
.area h3 { display: flex; align-items: center; gap: 4px; line-height: 11px; font-size: 7px; padding-left: 1px; margin-bottom: 3px; }
.area h3 svg { width: 8px; height: 8px; }
.pill { display: flex; align-items: center; justify-content: space-between; width: 100%; height: 11px; border: 1px solid #ababab; padding: 0 5px 0 3px; margin-bottom: 1px; background: #fff; }
.pill .caret { border-width: 3px 3px 0; border-top-color: #222; }
.update { display: flex; justify-content: space-between; align-items: center; margin: 11px 0 0; white-space: nowrap; }
.update label { display: flex; align-items: center; gap: 4px; }
.update button { width: 56px; height: 13px; border: 1px solid #ddd; color: #b5b5b5; flex: none; }

/* status bar */
.status { flex: none; height: 14px; background: #217346; color: #e8f3ec; display: flex; align-items: center; padding: 0 5px 0 4px; }
.ready { font-size: 6px; }
.macro { width: 8px; height: 8px; margin: 0 auto 0 12px; }
.view { width: 22px; height: 14px; display: grid; place-items: center; }
.view.on { background: #1a5c38; }
.view svg { width: 8px; height: 8px; }
.pm { width: 9px; text-align: center; }
input[type=range] { appearance: none; width: 58px; height: 8px; background: linear-gradient(#b8d4c3, #b8d4c3) 0 50% / 100% 1px no-repeat; }
input[type=range]::-webkit-slider-thumb { appearance: none; width: 2px; height: 7px; background: #fff; }
.pct { margin-left: 7px; white-space: nowrap; }

/* taskbar */
.taskbar { flex: none; height: 23px; background: linear-gradient(90deg, #1d1d1d 60%, #10131a 75%, #050505); display: flex; color: #fff; }
.os { width: 28px; display: grid; place-items: center; }
.os svg { width: 12px; height: 12px; }
.apps { display: grid; grid-template-columns: repeat(16, 1fr); width: 459px; margin-left: 14px; }
.apps button { display: grid; place-items: center; }
.apps svg { width: 14px; height: 14px; }
.apps .run { background: linear-gradient(#76b9ed, #76b9ed) 50% 100% / 24px 2px no-repeat; }
.apps .now { background: linear-gradient(#76b9ed, #76b9ed) 50% 100% / 100% 2px no-repeat, #4a4f4d; }
.fs { background: #a93a78; border-radius: 2px; width: 14px; height: 14px; font-size: 8px; line-height: 14px; }
.tray { margin-left: auto; display: flex; align-items: center; gap: 4px; padding-right: 8px; margin-right: 2px; }
.tray svg { width: 10px; height: 10px; }
.tray .help { width: 14px; height: 14px; margin-right: 2px; }
.tray .note { width: 16px; height: 14px; margin-left: 5px; }
.tray time { line-height: 10px; text-align: center; }
```
